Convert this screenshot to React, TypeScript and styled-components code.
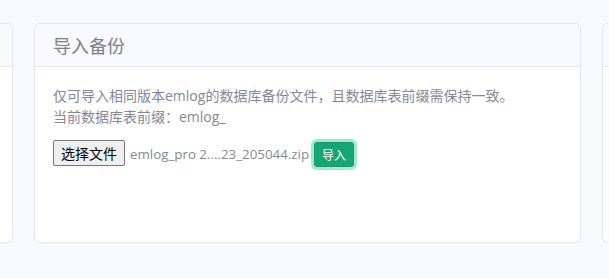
import React from "react";
import styled, { createGlobalStyle, css } from "styled-components";

const Global = createGlobalStyle`
  html, body { margin: 0; padding: 0; background: #f8f9fc; }
  body {
    font-family: "Open Sans", "Noto Sans CJK SC", sans-serif;
    color: #858796;
    font-size: 14px;
  }
`;

const Page = styled.div`
  width: 609px;
  height: 278px;
  overflow: hidden;
  background: #f8f9fc;
  padding-top: 23px;
  box-sizing: border-box;
`;

const Row = styled.div`
  display: grid;
  grid-template-columns: 13px 547px 6px;
  column-gap: 21px;
`;

const Card = styled.div<{ $clip?: "left" | "right" }>`
  height: 220px;
  box-sizing: border-box;
  background: #fff;
  border: 1px solid #e3e6f0;
  border-radius: 6px;
  overflow: hidden;
  display: flex;
  flex-direction: column;
  ${(p) =>
    p.$clip === "left" &&
    css`
      border-left: none;
      border-top-left-radius: 0;
      border-bottom-left-radius: 0;
    `}
  ${(p) =>
    p.$clip === "right" &&
    css`
      border-right: none;
      border-top-right-radius: 0;
      border-bottom-right-radius: 0;
    `}
`;

const Header = styled.div`
  height: 42px;
  flex: none;
  background: #f8f9fc;
  border-bottom: 1px solid #e3e6f0;
  display: flex;
  align-items: center;
  padding: 0 18px;
`;

const Title = styled.h6`
  margin: 0;
  font-size: 18px;
  font-weight: 400;
  color: #7d7f8d;
  font-family: "Noto Sans CJK SC", sans-serif;
`;

const Body = styled.div`
  padding: 18px 18px;
`;

const Text = styled.p`
  margin: 0;
  font-size: 14px;
  line-height: 21px;
  color: #858796;
`;

const FormRow = styled.div`
  display: flex;
  align-items: center;
  margin-top: 12px;
  height: 30px;
`;

const FileButton = styled.span`
  box-sizing: border-box;
  height: 26px;
  padding: 0 7px;
  display: inline-flex;
  align-items: center;
  background: #efefef;
  border: 1px solid #767676;
  border-radius: 2px;
  color: #000;
  font-size: 14px;
  font-family: "Noto Sans CJK SC", sans-serif;
  margin-top: -2px;
`;

const FileName = styled.span`
  margin-left: 5px;
  font-size: 13.33px;
  color: #858796;
  margin-top: -1px;
`;

const SubmitButton = styled.button`
  margin-left: 5px;
  box-sizing: border-box;
  height: 25px;
  padding: 0 7px;
  background: #17a673;
  border: 1px solid #169b6b;
  border-radius: 3px;
  color: #fff;
  font-size: 12px;
  font-family: "Noto Sans CJK SC", sans-serif;
  box-shadow: 0 0 0 3px rgba(72, 211, 161, 0.5);
  cursor: pointer;
`;

export default function App() {
  return (
    <>
      <Global />
      <Page>
        <Row>
          <Card $clip="left">
            <Header />
          </Card>
          <Card>
            <Header>
              <Title>导入备份</Title>
            </Header>
            <Body>
              <Text>仅可导入相同版本emlog的数据库备份文件，且数据库表前缀需保持一致。</Text>
              <Text>当前数据库表前缀：emlog_</Text>
              <FormRow>
                <FileButton>选择文件</FileButton>
                <FileName>emlog_pro 2....23_205044.zip</FileName>
                <SubmitButton>导入</SubmitButton>
              </FormRow>
            </Body>
          </Card>
          <Card $clip="right">
            <Header />
          </Card>
        </Row>
      </Page>
    </>
  );
}
